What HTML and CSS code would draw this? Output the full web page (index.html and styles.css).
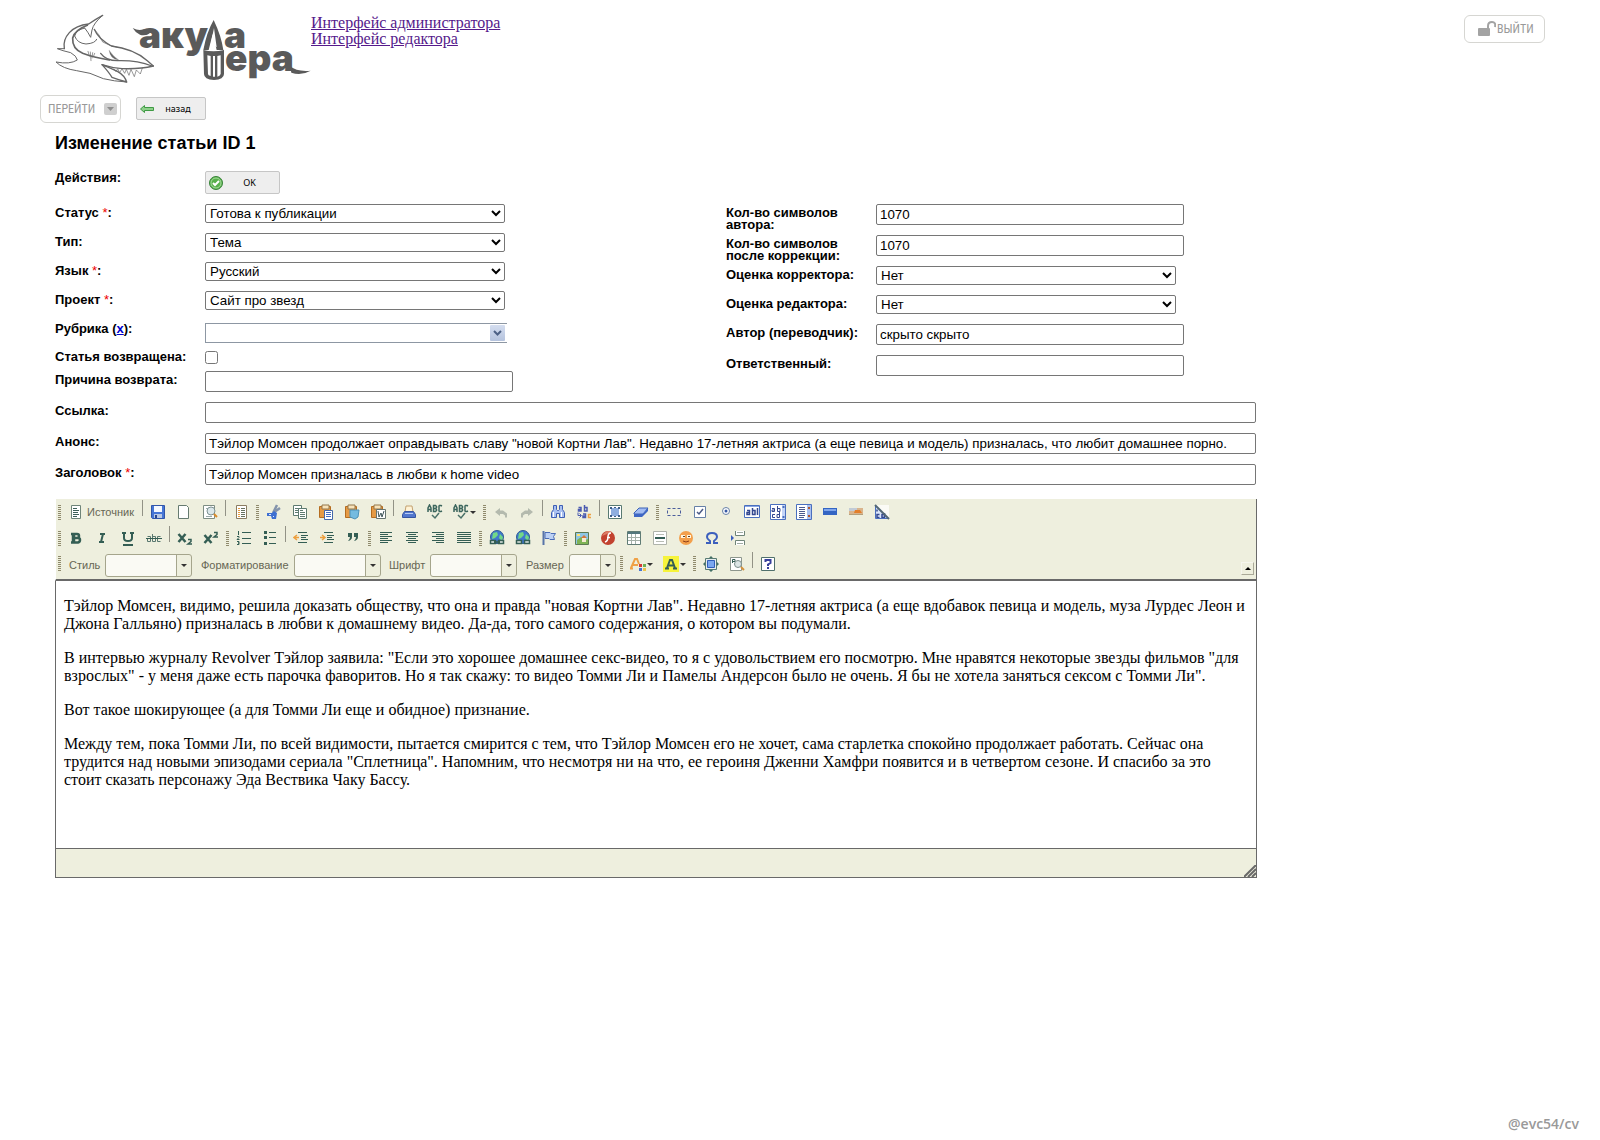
FILE: index.html
```
<!DOCTYPE html>
<html lang="ru">
<head>
<meta charset="utf-8">
<title>Изменение статьи ID 1</title>
<link rel="stylesheet" href="styles.css">
</head>
<body>
<svg class="sprite" aria-hidden="true">
  <symbol id="i-source" viewBox="0 0 16 16"><path d="M3.500 1.500h9v13h-9z" fill="#fff" stroke="#6f8478"/><path d="M5 4.500h4M5 6.500h6M5 8.500h5M5 10.500h6M5 12.500h4" stroke="#3d5f58"/></symbol>
  <symbol id="i-save" viewBox="0 0 16 16"><path d="M1.500 1.500h13v13h-12l-1-1z" fill="#4676d6" stroke="#3155a8"/><path d="M4 2h8v6H4z" fill="#f4f8ff"/><path d="M4 10h8v4H4z" fill="#b9c8e4"/><path d="M5 11h2v3H5z" fill="#27458f"/></symbol>
  <symbol id="i-new" viewBox="0 0 16 16"><path d="M2.500 1.500h8l2 2v11h-10z" fill="#fff" stroke="#667b70"/></symbol>
  <symbol id="i-preview" viewBox="0 0 16 16"><path d="M1.500 1.500h11v13h-11z" fill="#fff" stroke="#7d8d83"/><path d="M4 4.500h3M4 12.500h6" stroke="#9aa"/><circle cx="9" cy="7" r="4" fill="#dbe7ea" stroke="#7e9292"/><path d="M12 10l3 3" stroke="#d98b2b" stroke-width="2"/></symbol>
  <symbol id="i-template" viewBox="0 0 16 16"><path d="M3.500 1.500h10v13h-10z" fill="#fff" stroke="#8b7d62"/><path d="M5 4.500h2M5 6.500h2M5 8.500h2M5 10.500h2M5 12.500h2" stroke="#e79b3c"/><path d="M8 4.500h4M8 6.500h4M8 8.500h4M8 10.500h4M8 12.500h4" stroke="#66705f"/></symbol>
  <symbol id="i-cut" viewBox="0 0 16 16"><path d="M7 9l4-8M7 9l7-5" stroke="#8494ac" stroke-width="2.500"/><path d="M1 9h5l2-2 3 2-1 6H6l-1-3H1z" fill="#3d6fd1"/><path d="M3 10.500h2M7 12.500h1" stroke="#dfe9ff"/></symbol>
  <symbol id="i-copy" viewBox="0 0 16 16"><path d="M1.500 1.500h8v10h-8z" fill="#fff" stroke="#5d7a70"/><path d="M3 4.500h4M3 6.500h4M3 8.500h3" stroke="#5d7a70"/><path d="M6.500 4.500h8v10h-8z" fill="#fff" stroke="#5d7a70"/><path d="M8 6.500h3M8 8.500h5M8 10.500h5M8 12.500h5" stroke="#5d7a70"/></symbol>
  <symbol id="i-clip" viewBox="0 0 16 16"><path d="M1.500 2.500h11v11h-11z" fill="#e59a45" stroke="#b56d20"/><path d="M4 1h7v4H4z" fill="#f7e3ba" stroke="#94774a"/></symbol>
  <symbol id="i-paste" viewBox="0 0 16 16"><use href="#i-clip"/><path d="M6.500 6.500h8v9h-8z" fill="#fff" stroke="#4567a9"/><path d="M8 8.500h5M8 10.500h5M8 12.500h5" stroke="#446cc0"/></symbol>
  <symbol id="i-pastetext" viewBox="0 0 16 16"><use href="#i-clip"/><path d="M6 6h9l-1 7-3 2-5-2z" fill="#74bbe0" stroke="#4c92b8"/></symbol>
  <symbol id="i-pasteword" viewBox="0 0 16 16"><use href="#i-clip"/><path d="M6.500 5.500h9v9h-9z" fill="#fff" stroke="#66736e"/><path d="M8 7l1 6 2-4 1 4 2-6" fill="none" stroke="#3f5558"/></symbol>
  <symbol id="i-print" viewBox="0 0 16 16"><path d="M5 2h6l1 6H4z" fill="#fff3d6" stroke="#c3a171"/><path d="M3.500 7.500h9l2 3v3h-13v-3z" fill="#5277ce" stroke="#3655a2"/><path d="M4 9.500h8" stroke="#b9ccf5"/></symbol>
  <symbol id="i-spell" viewBox="0 0 16 16"><path d="M1 8V4l1.500-3L4 4v4M1 5.500h3M6.500 1.500v6h2l1-1V5.500l-1-1h-2 2l1-1v-1l-1-1zM15 2l-1-.5h-1.500l-.5.5v5l.5.500H14l1-.5" fill="none" stroke="#3c665d" stroke-width="1.500"/><path d="M5 11l3 3 4-5" fill="none" stroke="#4a7168" stroke-width="1.500"/></symbol>
  <symbol id="i-undo" viewBox="0 0 16 16"><path d="M2 8l5-4v2.500h3l4 3v4h-2v-2l-2-1.500H7V12z" fill="#b4baae"/></symbol>
  <symbol id="i-redo" viewBox="0 0 16 16"><path d="M14 8L9 4v2.500H6l-4 3v4h2v-2L6 10h3v2z" fill="#b4baae"/></symbol>
  <symbol id="i-find" viewBox="0 0 16 16"><path d="M3.500 1.500h3v4l1 1h1l1-1v-4h3v4l2 3v5h-5v-4h-3v4h-5v-5l2-3z" fill="#a9c0f0" stroke="#3e5fb5"/><path d="M3.500 8v5M11.500 8v5" stroke="#fff"/></symbol>
  <symbol id="i-replace" viewBox="0 0 16 16"><path d="M2.500 3.500H5V7H2.500V5.500H5M8.500 1v6H11V3.500H8.500M7 10h2.500v3.500H7V12h2.500" fill="none" stroke="#4a5ab0" stroke-width="1.500"/><path d="M2 8.500v3h3M3.500 9.500l2 2-2 2" fill="none" stroke="#4a5ab0"/><path d="M15 10.500h-2.500v3H15" fill="none" stroke="#eda041" stroke-width="1.500"/></symbol>
  <symbol id="i-selectall" viewBox="0 0 16 16"><path d="M1.500 1.500h13v13h-13z" fill="#fff" stroke="#587a72"/><path d="M4 4h8v8H4z" fill="#8faedf"/><path d="M3 3h2v2H3zM11 3h2v2h-2zM3 11h2v2H3zM11 11h2v2h-2zM7 3h2v1H7zM7 12h2v1H7z" fill="#3e5d86"/></symbol>
  <symbol id="i-erase" viewBox="0 0 16 16"><path d="M1 9l5-5h9l-5 6H1z" fill="#a3bdf3" stroke="#3c62b6"/><path d="M1 9v4h8l6-6V4l-5 6H1z" fill="#3e67c5"/></symbol>
  <symbol id="i-form" viewBox="0 0 16 16"><path d="M1.500 4.500h13v7h-13z" fill="none" stroke="#4b5d9c" stroke-dasharray="3 2"/></symbol>
  <symbol id="i-checkbox" viewBox="0 0 16 16"><path d="M2.500 2.500h11v11h-11z" fill="#fff" stroke="#6680a7"/><path d="M5 8l2 2 4-5" fill="none" stroke="#4a5a86" stroke-width="1.500"/></symbol>
  <symbol id="i-radio" viewBox="0 0 16 16"><circle cx="8" cy="7" r="3.500" fill="#fff" stroke="#6680a7"/><circle cx="8" cy="7" r="1.500" fill="#3658a3"/></symbol>
  <symbol id="i-textfield" viewBox="0 0 16 16"><path d="M.5 1.500h15v12H.5z" fill="#fff" stroke="#4a6fbe"/><path d="M1 2.500h14" stroke="#89a6e4"/><path d="M3 6.500h2.500v4H3v-2h2.500M8.500 4v6.500H11v-4H8.500M13.500 4v7" fill="none" stroke="#34488f" stroke-width="1.500"/></symbol>
  <symbol id="i-textarea" viewBox="0 0 16 16"><path d="M.5.5h15v15H.5z" fill="#fff" stroke="#4a6fbe"/><path d="M2 4.500h2.500v3H2V6h2.500M7.500 2v5.500H10v-3H7.500M5 10.500H2.500v3H5M9.500 8v5.500H7v-3h2.500" fill="none" stroke="#34488f"/><path d="M12 1h3v14h-3z" fill="#c4d5f7"/><path d="M12.500 3h2M12.500 13h2" stroke="#4a6fbe" stroke-width="2"/></symbol>
  <symbol id="i-select" viewBox="0 0 16 16"><path d="M.5.5h15v15H.5z" fill="#fff" stroke="#4a6fbe"/><path d="M3 3.500h6M3 5.500h6M3 7.500h6M3 9.500h6M3 11.500h6M3 13.500h5" stroke="#4c5a8d"/><path d="M11 1h4v14h-4z" fill="#a8bff0"/><path d="M12 4h2M12 12h2" stroke="#b3572f" stroke-width="2"/></symbol>
  <symbol id="i-button" viewBox="0 0 16 16"><path d="M1 4h14v7H1z" fill="#3465c3"/><path d="M2 5h12v2H2z" fill="#7fa5ec"/></symbol>
  <symbol id="i-imagebutton" viewBox="0 0 16 16"><path d="M1 4h14v7H1z" fill="#d9b48c"/><path d="M1 4h8v3H1z" fill="#c2cbd6"/><path d="M7 6h5l2 3H6z" fill="#e37f2b"/><path d="M1 10.500h14" stroke="#b4a07c"/></symbol>
  <symbol id="i-hidden" viewBox="0 0 16 16"><path d="M1 1h14v14z" fill="#fbfbf6"/><path d="M1 1l14 14H1z" fill="#dae5fb"/><path d="M3 5.500v2M5.500 10.500H3v3h2.500M10.500 9v4.500H8v-3h2.500" fill="none" stroke="#34488f" stroke-width="1.500"/><path d="M1.500 1v13.500H15" fill="none" stroke="#4a6fbe"/><path d="M1 1l14 14" stroke="#526775" stroke-width="2"/></symbol>
  <symbol id="i-bold" viewBox="0 0 16 16"><path d="M5 4h4q2 0 2 2t-2 2H5h5q2 0 2 2t-2 2.500H5zM6 4v8.500M3 4h2M3 12.500h2" fill="none" stroke="#345e54" stroke-width="2.500"/></symbol>
  <symbol id="i-italic" viewBox="0 0 16 16"><path d="M6 4h5M5 12h5M9 4l-2 8" stroke="#345e54" stroke-width="2"/></symbol>
  <symbol id="i-underline" viewBox="0 0 16 16"><path d="M2 3h4M10 3h4M4 3v5q0 3 4 3t4-3V3" fill="none" stroke="#345e54" stroke-width="2"/><path d="M3 15h10" stroke="#345e54" stroke-width="2"/></symbol>
  <symbol id="i-strike" viewBox="0 0 16 16"><path d="M1.500 6.500h3v5h-3v-3M6.500 4v7.500h3v-5h-3M14.500 6.500h-3v5h3" fill="none" stroke="#59786f"/><path d="M0 8.500h16" stroke="#345e54"/></symbol>
  <symbol id="i-sub" viewBox="0 0 16 16"><path d="M1.500 4l7 8M8.500 4l-7 8" stroke="#345e54" stroke-width="2.500"/><path d="M11 9.500h3v2l-3 2.500h4" fill="none" stroke="#345e54" stroke-width="1.500"/></symbol>
  <symbol id="i-sup" viewBox="0 0 16 16"><path d="M1.500 5l7 8M8.500 5l-7 8" stroke="#345e54" stroke-width="2.500"/><path d="M11 2.500h3v2L11 7h4" fill="none" stroke="#345e54" stroke-width="1.500"/></symbol>
  <symbol id="i-ol" viewBox="0 0 16 16"><path d="M2.500 1v4M1 6.500h2v1l-2 2h2.500M1 11.500h2v1.500H2h1v1.500H1" fill="none" stroke="#345e54"/><path d="M6 2.500h9M6 8.500h9M6 13.500h9" stroke="#345e54"/></symbol>
  <symbol id="i-ul" viewBox="0 0 16 16"><path d="M2 1h3v3H2zM2 6h3v3H2zM2 12h3v3H2z" fill="#345e54"/><path d="M7 2.500h7M7 7.500h7M7 13.500h7" stroke="#345e54"/></symbol>
  <symbol id="i-outdent" viewBox="0 0 16 16"><path d="M5 2.500h9M8 5.500h7M8 7.500h5M8 9.500h7M5 12.500h9" stroke="#345e54"/><path d="M1 7.500h5M4 5L1 7.500 4 10" fill="none" stroke="#eda03f" stroke-width="1.500"/></symbol>
  <symbol id="i-indent" viewBox="0 0 16 16"><path d="M5 2.500h9M8 5.500h7M8 7.500h5M8 9.500h7M5 12.500h9" stroke="#345e54"/><path d="M1 7.500h5M3 5l3 2.500L3 10" fill="none" stroke="#eda03f" stroke-width="1.500"/></symbol>
  <symbol id="i-quote" viewBox="0 0 16 16"><path d="M3 3h4v4q0 3-4 4 2-2 2-4H3zM9 3h4v4q0 3-4 4 2-2 2-4H9z" fill="#345e54"/></symbol>
  <symbol id="i-left" viewBox="0 0 16 16"><path d="M2 2.500h12M2 4.500h8M2 6.500h12M2 8.500h8M2 10.500h12M2 12.500h8" stroke="#345e54"/></symbol>
  <symbol id="i-center" viewBox="0 0 16 16"><path d="M2 2.500h12M4 4.500h8M2 6.500h12M4 8.500h8M2 10.500h12M4 12.500h8" stroke="#345e54"/></symbol>
  <symbol id="i-right" viewBox="0 0 16 16"><path d="M2 2.500h12M6 4.500h8M2 6.500h12M6 8.500h8M2 10.500h12M6 12.500h8" stroke="#345e54"/></symbol>
  <symbol id="i-justify" viewBox="0 0 16 16"><path d="M1 2.500h14M1 4.500h14M1 6.500h14M1 8.500h14M1 10.500h14M1 12.500h14" stroke="#345e54"/></symbol>
  <symbol id="i-globe" viewBox="0 0 16 16"><circle cx="8" cy="7" r="6.500" fill="#3f78cf" stroke="#2f5d90"/><path d="M4 3l4-1 1 3-3 3-3 1zM11 4l3 3-1 4-3-3z" fill="#72d887"/></symbol>
  <symbol id="i-link" viewBox="0 0 16 16"><use href="#i-globe"/><path d="M1.500 10.500h5v3h-5zM9.500 10.500h5v3h-5zM5 12h6" fill="#dfe9e4" stroke="#345e54" stroke-width="1.500"/></symbol>
  <symbol id="i-unlink" viewBox="0 0 16 16"><use href="#i-globe"/><path d="M1.500 10.500h5v3h-5zM9.500 10.500h5v3h-5z" fill="#dfe9e4" stroke="#345e54" stroke-width="1.500"/></symbol>
  <symbol id="i-anchor" viewBox="0 0 16 16"><path d="M2.500 1v14" stroke="#5874a9" stroke-width="2"/><path d="M4 2.500h5l1 1h4.500l-2 3 1 3H9l-1-1H4z" fill="#bcd1f4" stroke="#4a6cb7"/></symbol>
  <symbol id="i-image" viewBox="0 0 16 16"><path d="M1.500 2.500h13v12h-13z" fill="#8fc6e4" stroke="#5d7a53"/><path d="M3 10l4-3 4 3 3-1v5H3z" fill="#7fb356"/><path d="M8 8h4v4H8z" fill="#f5ead2"/><path d="M7 8l3-3 3 3z" fill="#d7763c"/><path d="M3 5h3" stroke="#ffe274" stroke-width="2"/></symbol>
  <symbol id="i-flash" viewBox="0 0 16 16"><circle cx="8" cy="8" r="7" fill="#c2422f"/><path d="M2 6a7 7 0 0 1 10-4z" fill="#dd7c66"/><path d="M11 3q-3 0-3 4t-3 5M7 7.500h3" fill="none" stroke="#fff" stroke-width="1.500"/></symbol>
  <symbol id="i-table" viewBox="0 0 16 16"><path d="M1.500 1.500h13v13h-13z" fill="#fff" stroke="#607c75"/><path d="M2 3h12" stroke="#54777d" stroke-width="2"/><path d="M2 7.500h12M2 10.500h12M5.500 4v10M9.500 4v10" stroke="#a4b0a8"/></symbol>
  <symbol id="i-hr" viewBox="0 0 16 16"><path d="M1.500 1.500h13v13h-13z" fill="#fff" stroke="#afb3aa"/><path d="M4 4.500h8M4 11.500h8" stroke="#b9bdb5"/><path d="M3 8h10" stroke="#345e54" stroke-width="2"/></symbol>
  <symbol id="i-smiley" viewBox="0 0 16 16"><circle cx="8" cy="8" r="7" fill="#f3a04c"/><path d="M3 5h4v3H3zM9 5h4v3H9z" fill="#fff5dc"/><path d="M5 6.500h2M10 6.500h2" stroke="#59412d"/><path d="M5 11q3 2 6 0" fill="none" stroke="#8e3e17"/></symbol>
  <symbol id="i-omega" viewBox="0 0 16 16"><path d="M2 13h4v-2Q3 9 3 7q0-4 5-4t5 4q0 2-3 4v2h4" fill="none" stroke="#3c5fbd" stroke-width="2"/></symbol>
  <symbol id="i-pagebreak" viewBox="0 0 16 16"><path d="M5.500 1v4.500h9V1M5.500 15v-4.500h9V15" fill="#fff" stroke="#6f8478"/><path d="M7 2.500h6M7 13.500h6" stroke="#9eaaa2"/><path d="M1 5l3 3-3 3z" fill="#3c5fbd"/></symbol>
  <symbol id="i-color" viewBox="0 0 16 16"><path d="M1 12l4-9h2l2 5M3 9h5M0 12.500h3" fill="none" stroke="#efa146" stroke-width="2"/><path d="M9 8h3v3H9z" fill="#d53c36"/><path d="M13 8h3v3h-3z" fill="#6db254"/><path d="M9 12h3v3H9z" fill="#4573d2"/><path d="M13 12h3v3h-3z" fill="#efc44c"/></symbol>
  <symbol id="i-bgcolor" viewBox="0 0 16 16"><path d="M0 0h16v16H0z" fill="#f6f33c"/><path d="M4 12l3-8h2l3 8M5 9.500h6M2 12.500h4M10 12.500h4" fill="none" stroke="#345e54" stroke-width="2"/></symbol>
  <symbol id="i-maximize" viewBox="0 0 16 16"><path d="M8 0l3 3H5zM8 16l3-3H5zM0 8l3-3v6zM16 8l-3-3v6z" fill="#426f66"/><path d="M2.500 2.500h11v11h-11z" fill="#e5ecee" stroke="#587a72"/><path d="M4.500 4.500h7v7h-7z" fill="#7ba7ef" stroke="#315eb9"/></symbol>
  <symbol id="i-blocks" viewBox="0 0 16 16"><path d="M1.500 1.500h11v13h-11z" fill="#fff" stroke="#8d968d"/><path d="M3.500 7V3.500H6v2H3.500" fill="none" stroke="#345e54"/><circle cx="9" cy="8" r="3.500" fill="#dce5e5" stroke="#7c8e8b"/><path d="M12 11l3 3" stroke="#d5923b" stroke-width="2"/></symbol>
  <symbol id="i-help" viewBox="0 0 16 16"><path d="M1.500 1.500h13v13h-13z" fill="#fff" stroke="#50706c"/><path d="M5.500 6V4h5v3L8 8.500V10M8 11v2" fill="none" stroke="#373f9b" stroke-width="2"/></symbol>
</svg>

<header class="header">
  <svg class="logo" viewBox="0 0 256 72" role="img" aria-label="Акула пера">
    <g transform="translate(-25 -13) scale(.333333)" fill="none" stroke="#666" stroke-width="3" stroke-linejoin="round" stroke-linecap="round">
      <path d="M218 46Q196 58 176 72Q138 76 118 98Q98 120 103 146" stroke-width="4"/>
      <path d="M172 76Q134 90 128 114Q126 146 158 160Q190 172 238 180" stroke-width="5"/>
      <path d="M164 84Q138 90 134 108Q142 130 168 132Q196 130 200 118" />
      <path d="M218 46Q190 70 186 90L182 112Q174 96 164 84"/>
      <path d="M193 88Q204 116 244 138Q310 146 352 182L370 198" stroke-width="4"/>
      <path d="M193 88Q208 102 218 126Q240 138 262 142" stroke-width="2"/>
      <path d="M212 160Q228 182 262 182Q320 180 366 198" stroke-width="4"/>
      <path d="M238 152Q252 172 266 180Q240 176 238 152z" fill="#666" stroke-width="1"/>
      <path d="M103 146L82 146Q96 152 122 158Q140 168 142 180Q120 194 78 186Q98 206 140 212Q180 216 220 236Q252 244 290 246"/>
      <path d="M216 194Q246 204 276 206Q330 208 370 198" stroke-width="4"/>
      <path d="M216 194Q236 216 246 232Q268 240 290 246Q284 226 262 214Q240 204 216 194" stroke-width="4"/>
      <path d="M252 207l6 8 5-9 6 12 7-12 8 14 5-12 8 18 6-18 10 22 6-20 12 12 6-18" stroke-width="2"/>
      <path d="M174 154l4 14M181 156l2 26M188 158l-2 16M194 160l-3 8" stroke-width="2"/>
      <path d="M308 84Q326 94 340 88Q356 84 368 92Q350 110 330 104Q316 98 308 84z" fill="#5a5a5a" stroke="none"/>
      <path d="M551 60Q574 108 580 150H560L548 102L536 150H520Q530 96 551 60z" fill="#5a5a5a" stroke="none"/>
      <path d="M552 84l-12 58q10-8 20 0z" fill="#fff" stroke="none"/>
      <path d="M520 150Q550 158 582 150V222Q582 238 552 240Q522 238 522 222z" fill="#5a5a5a" stroke="none"/>
      <path d="M532 166l10 2v60q-8-1-8-6zM549 168h6v62h-6zM562 168l10-2v56q-2 6-10 8z" fill="#fff" stroke="none"/>
      <path d="M780 198Q800 216 842 212Q814 228 784 218z" fill="#5a5a5a" stroke="none"/>
    </g>
    <text class="logo-text"><tspan x="84" y="35">аку</tspan><tspan x="169" y="35">а</tspan><tspan x="170" y="58">ера</tspan></text>
  </svg>
  <nav class="links">
    <a href="#admin">Интерфейс администратора</a>
    <a href="#editor">Интерфейс редактора</a>
  </nav>
  <button class="ghost logout" type="button">
    <svg width="18" height="16" viewBox="0 0 18 16" aria-hidden="true"><rect y="7" width="12" height="8" rx="1" fill="#a3a3a3"/><path d="M10 7V5q0-4 4-4t3 5" fill="none" stroke="#a3a3a3" stroke-width="2"/></svg>
    <span>ВЫЙТИ</span>
  </button>
</header>

<div class="nav-row">
  <button class="ghost goto" type="button">
    <span>ПЕРЕЙТИ</span>
    <svg width="13" height="12" viewBox="0 0 13 12" aria-hidden="true"><rect width="13" height="12" rx="2" fill="#cfcfcf"/><path d="M3 4h7L6.500 8z" fill="#8f8f8f"/></svg>
  </button>
  <button class="btn back" type="button">
    <svg width="14" height="8" viewBox="0 0 14 8" aria-hidden="true"><path d="M.5 4L4.500.5v2h9v3h-9v2z" fill="#8ed08a" stroke="#3f9a44"/></svg>
    <span>назад</span>
  </button>
</div>

<main class="main">
  <h1>Изменение статьи ID 1</h1>
  <form class="form">
    <div class="row actions">
      <span class="label">Действия:</span>
      <button class="btn ok" type="button">
        <svg width="14" height="14" viewBox="0 0 14 14" aria-hidden="true"><circle cx="7" cy="7" r="6.500" fill="#58b04c" stroke="#39833a"/><circle cx="7" cy="7" r="5" fill="none" stroke="#a6dc9c"/><path d="M4 7l2 2 4-4" fill="none" stroke="#fff" stroke-width="2"/></svg>
        <span>OK</span>
      </button>
    </div>
    <div class="columns">
      <div class="column">
        <div class="row"><label class="label" for="status">Статус <i>*</i>:</label><select id="status"><option>Готова к публикации</option></select></div>
        <div class="row"><label class="label" for="type">Тип:</label><select id="type"><option>Тема</option></select></div>
        <div class="row"><label class="label" for="lang">Язык <i>*</i>:</label><select id="lang"><option>Русский</option></select></div>
        <div class="row"><label class="label" for="project">Проект <i>*</i>:</label><select id="project"><option>Сайт про звезд</option></select></div>
        <div class="row rubric"><label class="label" for="rubric">Рубрика (<a href="#clear">x</a>):</label>
          <div class="combo-box"><input id="rubric" type="text"><button type="button" aria-label="Открыть список"><svg width="9" height="6" viewBox="0 0 9 6"><path d="M1 1l3.500 3.500L8 1" fill="none" stroke="#4d6185" stroke-width="2"/></svg></button></div>
        </div>
        <div class="row returned"><label class="label" for="returned">Статья возвращена:</label><input id="returned" type="checkbox"></div>
        <div class="row"><label class="label" for="reason">Причина возврата:</label><input class="text" id="reason" type="text"></div>
      </div>
      <div class="column">
        <div class="row"><label class="label" for="chars1">Кол-во символов автора:</label><input class="text" id="chars1" type="text" value="1070"></div>
        <div class="row"><label class="label" for="chars2">Кол-во символов после коррекции:</label><input class="text" id="chars2" type="text" value="1070"></div>
        <div class="row"><label class="label" for="mark1">Оценка корректора:</label><select id="mark1"><option>Нет</option></select></div>
        <div class="row"><label class="label" for="mark2">Оценка редактора:</label><select id="mark2"><option>Нет</option></select></div>
        <div class="row"><label class="label" for="author">Автор (переводчик):</label><input class="text" id="author" type="text" value="скрыто скрыто"></div>
        <div class="row"><label class="label" for="resp">Ответственный:</label><input class="text" id="resp" type="text"></div>
      </div>
    </div>
    <div class="row"><label class="label" for="link">Ссылка:</label><input class="text wide" id="link" type="text"></div>
    <div class="row"><label class="label" for="lead">Анонс:</label><input class="text wide" id="lead" type="text" value="Тэйлор Момсен продолжает оправдывать славу &quot;новой Кортни Лав&quot;. Недавно 17-летняя актриса (а еще певица и модель) призналась, что любит домашнее порно."></div>
    <div class="row"><label class="label" for="title">Заголовок <i>*</i>:</label><input class="text wide" id="title" type="text" value="Тэйлор Момсен призналась в любви к home video"></div>

    <section class="editor">
      <div class="toolbar">
        <div class="tools">
          <span class="handle"></span>
          <button class="tool source" type="button"><svg><use href="#i-source"/></svg><span>Источник</span></button>
          <span class="sep"></span>
          <button class="tool" type="button" aria-label="Сохранить"><svg><use href="#i-save"/></svg></button>
          <button class="tool" type="button" aria-label="Новая страница"><svg><use href="#i-new"/></svg></button>
          <button class="tool" type="button" aria-label="Предварительный просмотр"><svg><use href="#i-preview"/></svg></button>
          <span class="sep"></span>
          <button class="tool" type="button" aria-label="Шаблоны"><svg><use href="#i-template"/></svg></button>
          <span class="handle"></span>
          <button class="tool" type="button" aria-label="Вырезать"><svg><use href="#i-cut"/></svg></button>
          <button class="tool" type="button" aria-label="Копировать"><svg><use href="#i-copy"/></svg></button>
          <button class="tool" type="button" aria-label="Вставить"><svg><use href="#i-paste"/></svg></button>
          <button class="tool" type="button" aria-label="Вставить только текст"><svg><use href="#i-pastetext"/></svg></button>
          <button class="tool" type="button" aria-label="Вставить из Word"><svg><use href="#i-pasteword"/></svg></button>
          <span class="sep"></span>
          <button class="tool" type="button" aria-label="Печать"><svg><use href="#i-print"/></svg></button>
          <button class="tool" type="button" aria-label="Проверить орфографию"><svg><use href="#i-spell"/></svg></button>
          <button class="tool drop" type="button" aria-label="Орфография по мере ввода"><svg><use href="#i-spell"/></svg></button>
          <span class="handle"></span>
          <button class="tool" type="button" aria-label="Отменить"><svg><use href="#i-undo"/></svg></button>
          <button class="tool" type="button" aria-label="Повторить"><svg><use href="#i-redo"/></svg></button>
          <span class="sep"></span>
          <button class="tool" type="button" aria-label="Найти"><svg><use href="#i-find"/></svg></button>
          <button class="tool" type="button" aria-label="Заменить"><svg><use href="#i-replace"/></svg></button>
          <span class="sep"></span>
          <button class="tool" type="button" aria-label="Выделить все"><svg><use href="#i-selectall"/></svg></button>
          <button class="tool" type="button" aria-label="Убрать форматирование"><svg><use href="#i-erase"/></svg></button>
          <span class="handle"></span>
          <button class="tool" type="button" aria-label="Форма"><svg><use href="#i-form"/></svg></button>
          <button class="tool" type="button" aria-label="Флажок"><svg><use href="#i-checkbox"/></svg></button>
          <button class="tool" type="button" aria-label="Кнопка выбора"><svg><use href="#i-radio"/></svg></button>
          <button class="tool" type="button" aria-label="Текстовое поле"><svg><use href="#i-textfield"/></svg></button>
          <button class="tool" type="button" aria-label="Многострочное поле"><svg><use href="#i-textarea"/></svg></button>
          <button class="tool" type="button" aria-label="Список"><svg><use href="#i-select"/></svg></button>
          <button class="tool" type="button" aria-label="Кнопка"><svg><use href="#i-button"/></svg></button>
          <button class="tool" type="button" aria-label="Кнопка с изображением"><svg><use href="#i-imagebutton"/></svg></button>
          <button class="tool" type="button" aria-label="Скрытое поле"><svg><use href="#i-hidden"/></svg></button>
        </div>
        <div class="tools">
          <span class="handle"></span>
          <button class="tool" type="button" aria-label="Полужирный"><svg><use href="#i-bold"/></svg></button>
          <button class="tool" type="button" aria-label="Курсив"><svg><use href="#i-italic"/></svg></button>
          <button class="tool" type="button" aria-label="Подчеркнутый"><svg><use href="#i-underline"/></svg></button>
          <button class="tool" type="button" aria-label="Зачеркнутый"><svg><use href="#i-strike"/></svg></button>
          <span class="sep"></span>
          <button class="tool" type="button" aria-label="Подстрочный индекс"><svg><use href="#i-sub"/></svg></button>
          <button class="tool" type="button" aria-label="Надстрочный индекс"><svg><use href="#i-sup"/></svg></button>
          <span class="handle"></span>
          <button class="tool" type="button" aria-label="Нумерованный список"><svg><use href="#i-ol"/></svg></button>
          <button class="tool" type="button" aria-label="Маркированный список"><svg><use href="#i-ul"/></svg></button>
          <span class="sep"></span>
          <button class="tool" type="button" aria-label="Уменьшить отступ"><svg><use href="#i-outdent"/></svg></button>
          <button class="tool" type="button" aria-label="Увеличить отступ"><svg><use href="#i-indent"/></svg></button>
          <button class="tool" type="button" aria-label="Цитата"><svg><use href="#i-quote"/></svg></button>
          <span class="handle"></span>
          <button class="tool" type="button" aria-label="По левому краю"><svg><use href="#i-left"/></svg></button>
          <button class="tool" type="button" aria-label="По центру"><svg><use href="#i-center"/></svg></button>
          <button class="tool" type="button" aria-label="По правому краю"><svg><use href="#i-right"/></svg></button>
          <button class="tool" type="button" aria-label="По ширине"><svg><use href="#i-justify"/></svg></button>
          <span class="handle"></span>
          <button class="tool" type="button" aria-label="Вставить ссылку"><svg><use href="#i-link"/></svg></button>
          <button class="tool" type="button" aria-label="Убрать ссылку"><svg><use href="#i-unlink"/></svg></button>
          <button class="tool" type="button" aria-label="Якорь"><svg><use href="#i-anchor"/></svg></button>
          <span class="handle"></span>
          <button class="tool" type="button" aria-label="Изображение"><svg><use href="#i-image"/></svg></button>
          <button class="tool" type="button" aria-label="Flash"><svg><use href="#i-flash"/></svg></button>
          <button class="tool" type="button" aria-label="Таблица"><svg><use href="#i-table"/></svg></button>
          <button class="tool" type="button" aria-label="Горизонтальная линия"><svg><use href="#i-hr"/></svg></button>
          <button class="tool" type="button" aria-label="Смайл"><svg><use href="#i-smiley"/></svg></button>
          <button class="tool" type="button" aria-label="Специальный символ"><svg><use href="#i-omega"/></svg></button>
          <button class="tool" type="button" aria-label="Разрыв страницы"><svg><use href="#i-pagebreak"/></svg></button>
        </div>
        <div class="tools last">
          <span class="handle"></span>
          <span class="pick-label style">Стиль</span><button class="pick" type="button" aria-label="Стиль"></button>
          <span class="pick-label format">Форматирование</span><button class="pick" type="button" aria-label="Форматирование"></button>
          <span class="pick-label font">Шрифт</span><button class="pick" type="button" aria-label="Шрифт"></button>
          <span class="pick-label size">Размер</span><button class="pick small" type="button" aria-label="Размер"></button>
          <span class="handle"></span>
          <button class="tool drop" type="button" aria-label="Цвет текста"><svg><use href="#i-color"/></svg></button>
          <button class="tool drop" type="button" aria-label="Цвет фона"><svg><use href="#i-bgcolor"/></svg></button>
          <span class="handle"></span>
          <button class="tool" type="button" aria-label="Развернуть"><svg><use href="#i-maximize"/></svg></button>
          <button class="tool" type="button" aria-label="Отображать блоки"><svg><use href="#i-blocks"/></svg></button>
          <span class="sep"></span>
          <button class="tool" type="button" aria-label="О программе"><svg><use href="#i-help"/></svg></button>
          <button class="collapse" type="button" aria-label="Свернуть панель"></button>
        </div>
      </div>
      <div class="content">
        <p>Тэйлор Момсен, видимо, решила доказать обществу, что она и правда "новая Кортни Лав". Недавно 17-летняя актриса (а еще вдобавок певица и модель, муза Лурдес Леон и Джона Галльяно) призналась в любви к домашнему видео. Да-да, того самого содержания, о котором вы подумали.</p>
        <p>В интервью журналу Revolver Тэйлор заявила: "Если это хорошее домашнее секс-видео, то я с удовольствием его посмотрю. Мне нравятся некоторые звезды фильмов "для взрослых" - у меня даже есть парочка фаворитов. Но я так скажу: то видео Томми Ли и Памелы Андерсон было не очень. Я бы не хотела заняться сексом с Томми Ли".</p>
        <p>Вот такое шокирующее (а для Томми Ли еще и обидное) признание.</p>
        <p>Между тем, пока Томми Ли, по всей видимости, пытается смирится с тем, что Тэйлор Момсен его не хочет, сама старлетка спокойно продолжает работать. Сейчас она трудится над новыми эпизодами сериала "Сплетница". Напомним, что несмотря ни на что, ее героиня Дженни Хамфри появится и в четвертом сезоне. И спасибо за это стоит сказать персонажу Эда Вествика Чаку Бассу.</p>
      </div>
      <div class="statusbar"><svg width="12" height="12" viewBox="0 0 12 12" aria-hidden="true"><path d="M0 12L12 0M4 12l8-8M8 12l4-4" stroke="#696969" stroke-width="2"/></svg></div>
    </section>
  </form>
</main>
<footer class="footer">@evc54/cv</footer>
</body>
</html>
```
FILE: styles.css
```
* { box-sizing: border-box; }

body {
  margin: 0;
  min-height: 100vh;
  display: flex;
  flex-direction: column;
  background: #fff;
  color: #000;
  font-family: "Liberation Sans", Arial, sans-serif;
}

button { margin: 0; padding: 0; font-family: inherit; }
.sprite { display: none; }

/* Header */
.header {
  display: flex;
  align-items: flex-start;
  padding: 13px 55px 0;
}
.logo { width: 256px; height: 72px; flex: none; }
.logo-text { font: 900 37px Inter, sans-serif; fill: #5a5a5a; }
.links {
  display: flex;
  flex-direction: column;
  padding-top: 2px;
  font: 16px/16px "Liberation Serif", "Times New Roman", serif;
}
.links a { color: #551a8b; }

.ghost {
  display: flex;
  align-items: center;
  height: 28px;
  border: 1px solid #d6d6d2;
  border-radius: 6px;
  background: #fff;
  color: #999;
  font: 12px "Liberation Sans Narrow", "Roboto Condensed", Roboto, sans-serif;
}
.logout { width: 81px; margin: 2px 0 0 auto; padding-left: 13px; gap: 1px; }

.nav-row { display: flex; gap: 15px; padding: 10px 0 0 40px; }
.goto { width: 81px; padding: 0 3px 0 7px; justify-content: space-between; }

.btn {
  display: flex;
  align-items: center;
  height: 23px;
  padding: 0 3px;
  border: 1px solid #c6c6c6;
  border-radius: 2px;
  background: #eee;
  color: #000;
  font: 9px "Noto Sans", sans-serif;
}
.btn span { flex: 1; text-align: center; }
.back { width: 70px; margin-top: 2px; }
.ok { width: 75px; margin-top: 2px; }

/* Form */
.main { max-width: 1257px; padding-left: 55px; }
h1 { margin: 10px 0 16px; font-size: 18px; line-height: 20px; }
.row { display: flex; align-items: flex-start; margin-bottom: 10px; }
.actions { height: 35px; margin: 0; }
.columns { display: grid; grid-template-columns: 671px 1fr; }
.label {
  flex: none;
  width: 150px;
  padding: 3px 16px 0 0;
  font-size: 13px;
  line-height: 12px;
  font-weight: bold;
  margin-bottom: -8px;
}
.label i { color: #e00; font-style: normal; font-weight: normal; }
.label a { color: #00c; }
select, input { margin: 0; font-family: inherit; }
select { width: 300px; height: 19px; border: 1px solid #767676; border-radius: 2px; background: #fff; color: #000; }
.text { width: 308px; height: 21px; padding: 1px 3px; border: 1px solid #767676; border-radius: 2px; }
.text.wide { flex: 1; min-width: 0; margin-right: 1px; }
.rubric { height: 28px; margin: 0; }
.combo-box {
  display: flex;
  align-items: center;
  width: 302px;
  height: 20px;
  margin-top: 3px;
  border: 1px solid #8d97a3;
  border-right: 0;
}
.combo-box input { flex: 1; min-width: 0; height: 18px; border: 0; }
.combo-box button {
  display: flex;
  align-items: center;
  justify-content: center;
  width: 15px;
  height: 16px;
  margin-right: 2px;
  border: 0;
  border-radius: 1px;
  background: linear-gradient(#d5def0, #b5c3dd);
}
.returned { height: 23px; margin: 0; }
.returned input { margin-top: 3px; }

/* Rich text editor */
.editor { margin-top: 14px; border: solid #696969; border-width: 0 1px 1px; }
.toolbar {
  margin-left: -1px;
  border-left: 1px solid #fff;
  border-bottom: 2px solid #696969;
  background: #eeefde;
}
.tools { display: flex; height: 26px; }
.tools.last { height: 28px; }
.tool {
  display: flex;
  align-items: center;
  justify-content: center;
  flex: none;
  width: 26px;
  height: 26px;
  border: 0;
  background: none;
}
.tool svg { width: 16px; height: 16px; }
.tool.source {
  width: 77px;
  padding-left: 5px;
  gap: 3px;
  justify-content: flex-start;
  color: #666654;
  font: 11px "Liberation Sans", Arial, sans-serif;
}
.tool.drop { width: 33px; justify-content: flex-start; padding-left: 5px; }
.tool.drop::after, .pick::after, .collapse::after {
  content: "";
  border: solid transparent;
  border-width: 3px 3px 0;
  border-top-color: #333;
}
.tool.drop::after { margin-left: 1px; }
.handle {
  flex: none;
  width: 3px;
  height: 15px;
  margin: 6px 2px 0;
  background: repeating-linear-gradient(#8f8a6c 0 1px, #eeefde 1px 2px);
}
.sep { flex: none; width: 1px; height: 16px; margin: 1px 2px 0; background: #929286; }
.last .handle { margin-top: 5px; }
.pick-label {
  flex: none;
  padding-left: 6px;
  color: #666654;
  font: 11px/23px "Liberation Sans", Arial, sans-serif;
  margin-top: 3px;
}
.pick-label.style { width: 42px; }
.pick-label.format { width: 102px; padding-left: 9px; }
.pick-label.font { width: 49px; padding-left: 8px; }
.pick-label.size { width: 52px; padding-left: 9px; }
.pick {
  flex: none;
  display: flex;
  align-items: center;
  justify-content: flex-end;
  width: 87px;
  height: 23px;
  margin-top: 3px;
  padding-right: 4px;
  border: 1px solid #a5a58c;
  border-radius: 3px;
  background: linear-gradient(to left, #eeefde 14px, #a5a58c 14px 15px, #fafaf4 15px);
}
.pick.small { width: 47px; margin-right: 2px; }
.collapse {
  display: flex;
  align-items: center;
  justify-content: center;
  width: 13px;
  height: 13px;
  margin: 11px 2px 0 auto;
  border: 1px solid #f6f6ee;
  border-right-color: #aaa998;
  border-bottom-color: #aaa998;
  background: none;
}
.collapse::after { border-width: 0 3px 3px; border-bottom-color: #000; }
.content {
  min-height: 267px;
  padding: 16px 8px 1px;
  font: 16px/18px "Liberation Serif", "Times New Roman", serif;
}
.content p { margin: 0 0 16px; }
.statusbar {
  display: flex;
  align-items: flex-end;
  justify-content: flex-end;
  height: 29px;
  border-top: 1px solid #696969;
  background: #eeefde;
}

.footer {
  margin-top: auto;
  padding: 0 21px 6px 0;
  text-align: right;
  color: #999;
  font: 600 14px/20px "Open Sans", sans-serif;
}
```
